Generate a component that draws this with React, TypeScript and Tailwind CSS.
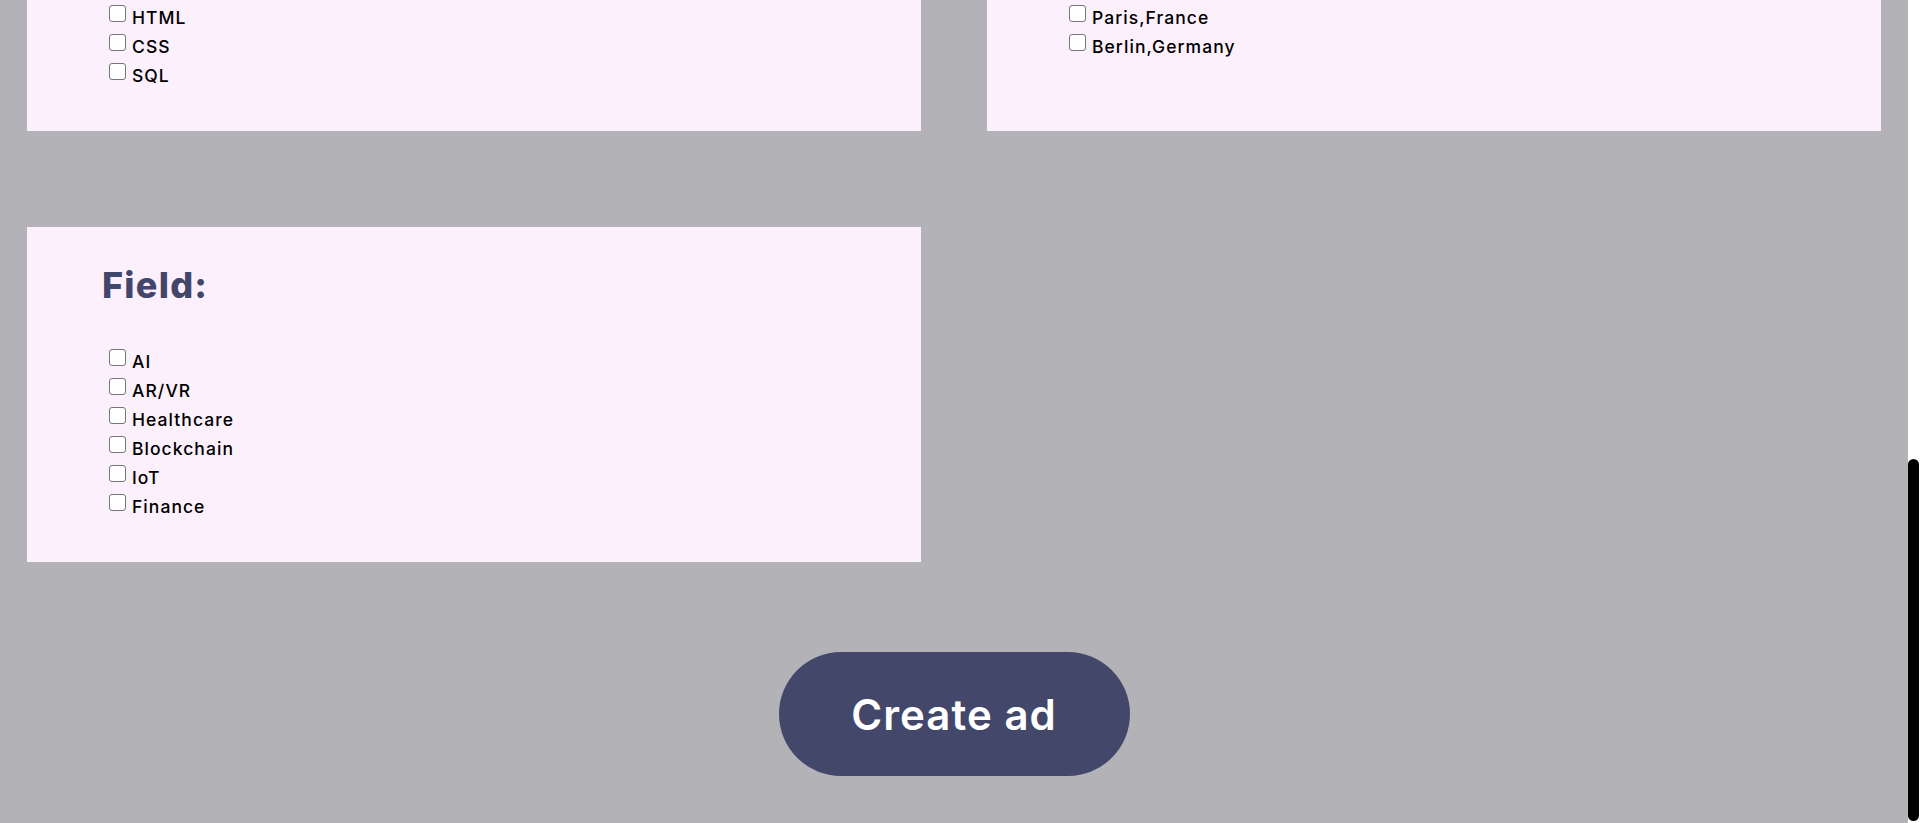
import React from "react";

const FONT = { fontFamily: "Inter, 'Noto Sans', 'DejaVu Sans', sans-serif" };

function Card({ title, items }: { title: string; items: string[] }) {
  return (
    <section className="bg-[#fcf0fc] px-[73px] pt-[36px] pb-[41px]">
      <h2 className="ml-[2px] text-[36px] font-extrabold leading-[44px] tracking-[0.035em] text-[#43466b]">{title}</h2>
      <ul className="mt-[40px] pl-[9px]">
        {items.map((it) => (
          <li key={it} className="flex h-[29px] items-start">
            <input
              type="checkbox"
              className="mt-[2px] h-[17px] w-[17px] shrink-0 appearance-none rounded-[3px] border border-[#767676] bg-white"
            />
            <span className="ml-[6px] text-[17.5px] font-medium leading-[29px] tracking-[0.06em] text-black">{it}</span>
          </li>
        ))}
      </ul>
    </section>
  );
}

export default function App() {
  const skills = ["Java", "Python", "JavaScript", "HTML", "CSS", "SQL"];
  const locations = ["New York,USA", "London,UK", "Tokyo,Japan", "Paris,France", "Berlin,Germany"];
  const fields = ["AI", "AR/VR", "Healthcare", "Blockchain", "IoT", "Finance"];
  return (
    <div className="flex h-[823px] w-[1920px] overflow-hidden bg-[#b3b2b7]" style={FONT}>
      <main className="flex h-[823px] w-[1908px] shrink-0 flex-col justify-end overflow-hidden px-[27px] pb-[47px]">
        <div className="grid shrink-0 grid-cols-2 gap-x-[66px] gap-y-[96px]">
          <Card title="Skills:" items={skills} />
          <Card title="Location:" items={locations} />
          <Card title="Field:" items={fields} />
        </div>
        <div className="mt-[90px] flex shrink-0 justify-center">
          <button className="h-[124px] w-[351px] rounded-full bg-[#43476a] text-[42px] font-semibold tracking-[0.025em] text-white">
            Create ad
          </button>
        </div>
      </main>
      <div className="flex h-[823px] w-[12px] shrink-0 flex-col justify-end bg-white">
        <div className="mb-[2px] h-[362px] w-[11px] rounded-full bg-black" />
      </div>
    </div>
  );
}
